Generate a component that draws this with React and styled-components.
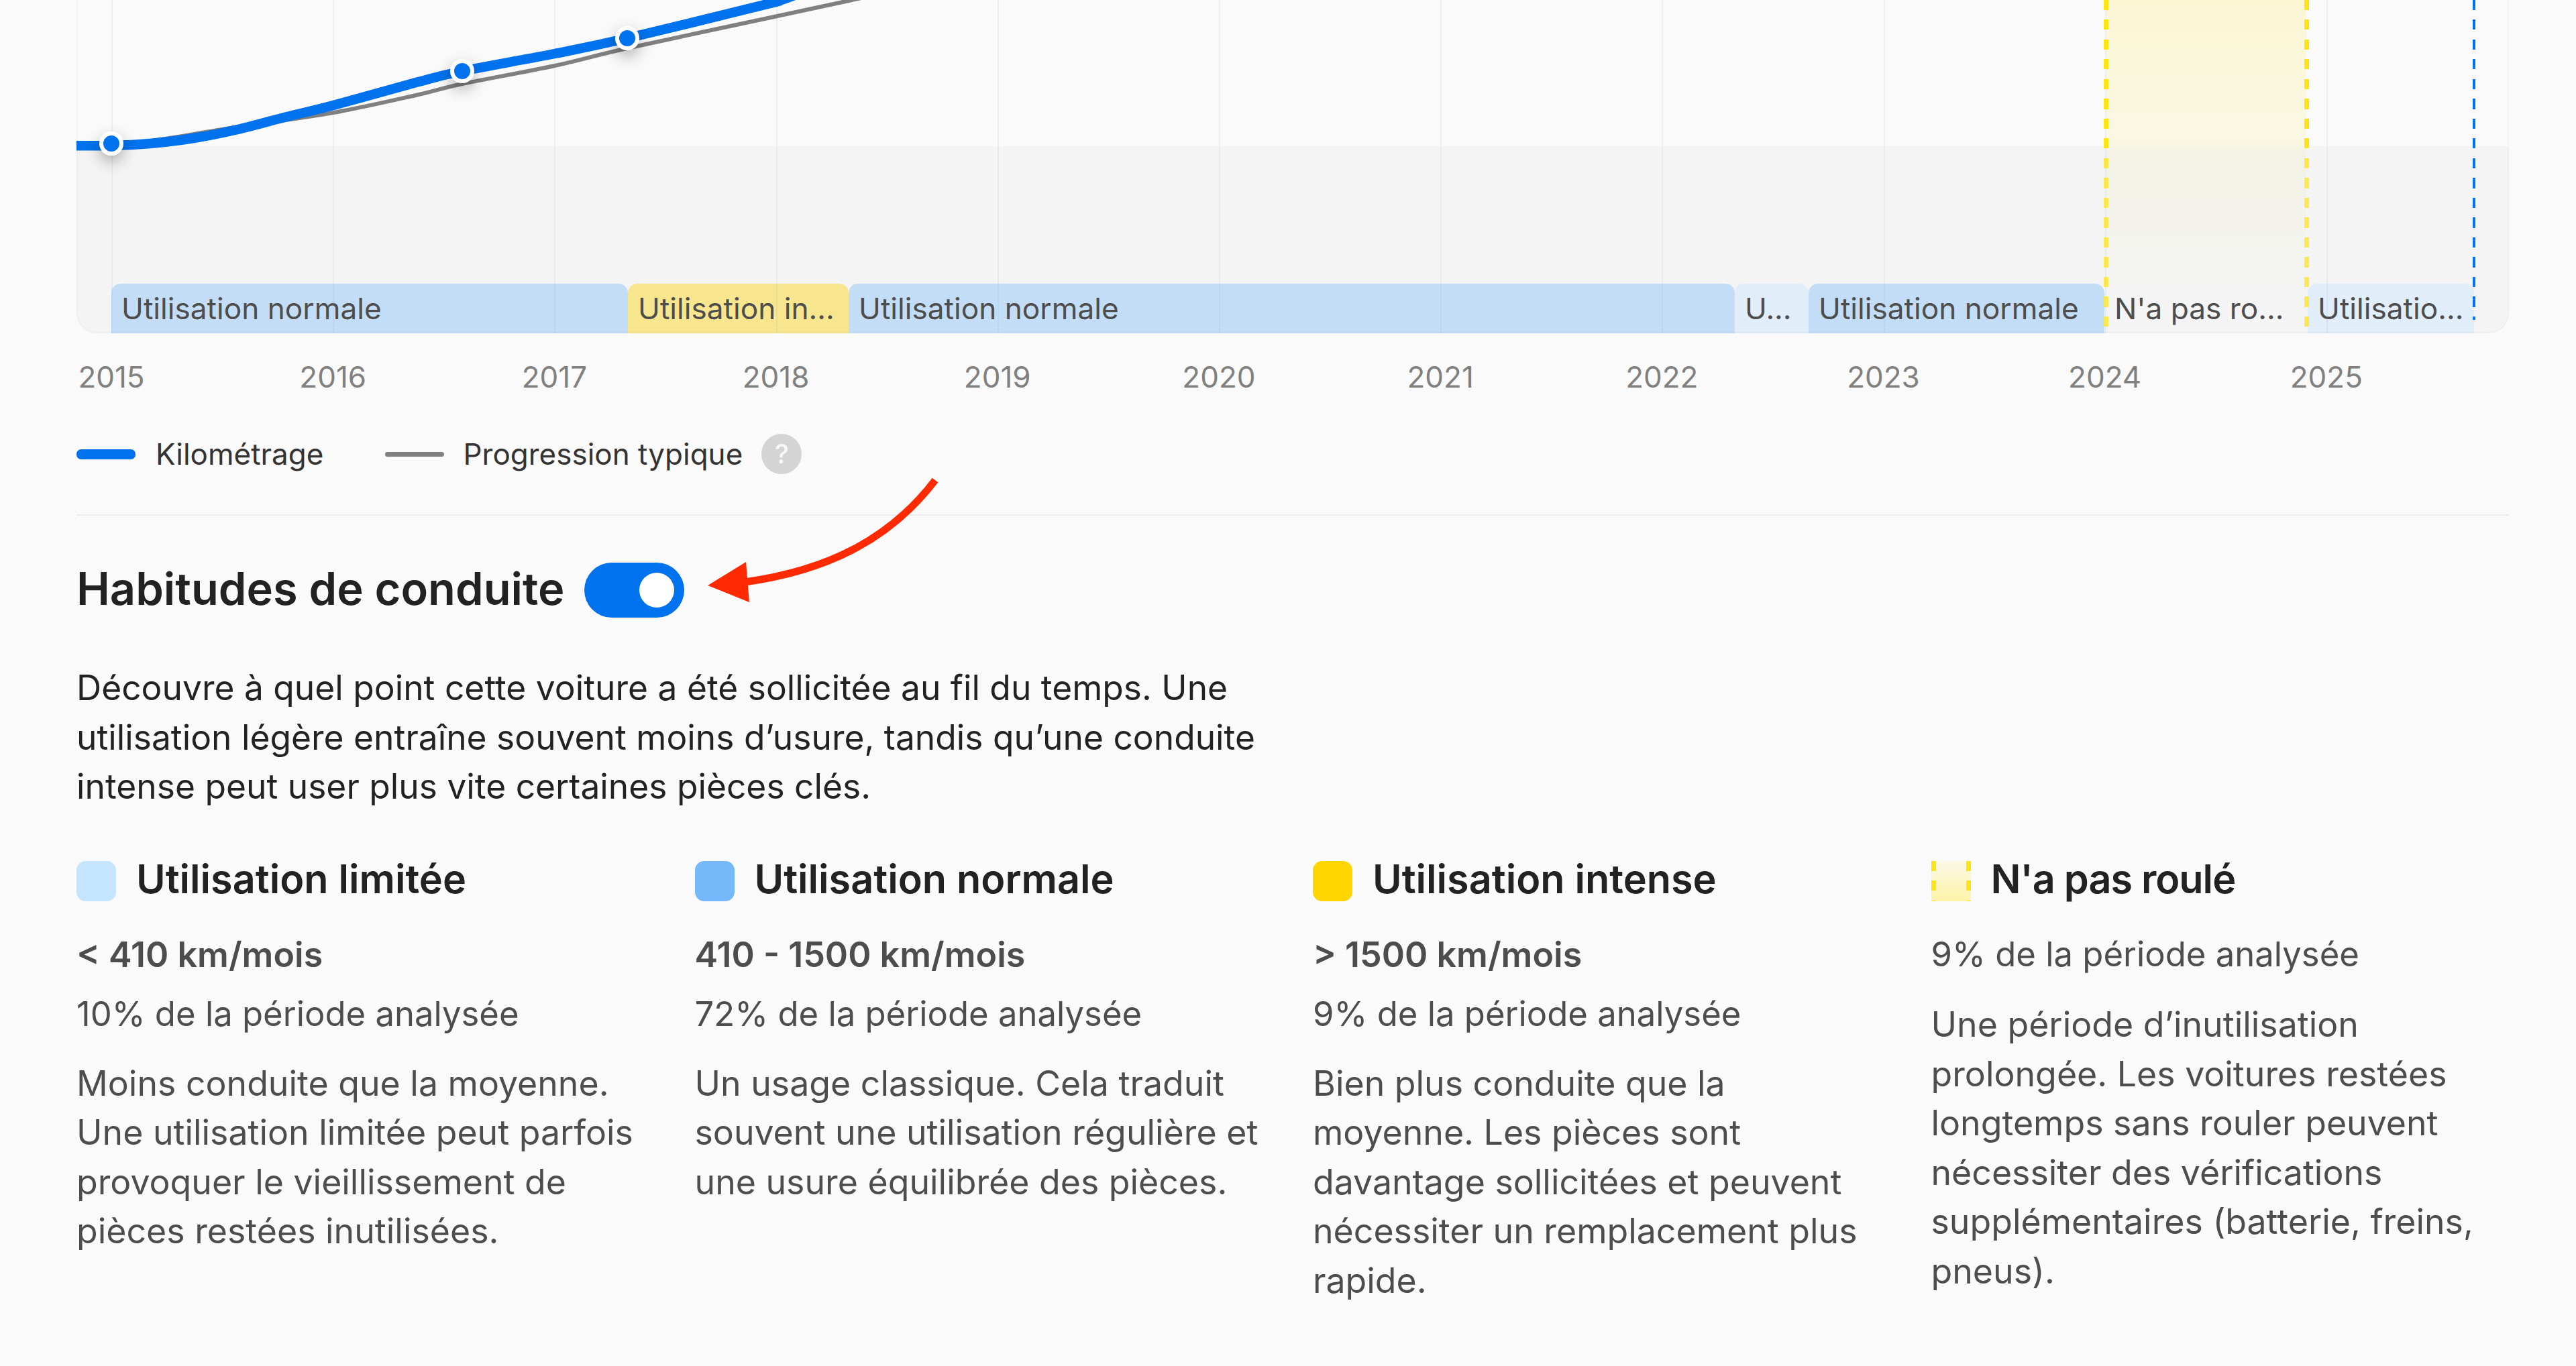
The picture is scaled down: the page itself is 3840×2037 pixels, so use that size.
import React from 'react'
import styled, { createGlobalStyle } from 'styled-components'

const YEARS = [2015, 2016, 2017, 2018, 2019, 2020, 2021, 2022, 2023, 2024, 2025]
const STEP = 330.2

const SEGMENTS = [
    { kind: 'normal', width: 770, label: 'Utilisation normale' },
    { kind: 'intense', width: 329, label: 'Utilisation in...' },
    { kind: 'normal', width: 1321, label: 'Utilisation normale' },
    { kind: 'light', width: 110, label: 'U...' },
    { kind: 'normal', width: 441, label: 'Utilisation normale' },
    { kind: 'none', width: 303, label: "N'a pas ro..." },
    { kind: 'light', width: 248, label: 'Utilisatio...' },
]

const USAGES = [
    {
        kind: 'limited',
        title: 'Utilisation limitée',
        range: '< 410 km/mois',
        share: '10% de la période analysée',
        text: 'Moins conduite que la moyenne. Une utilisation limitée peut parfois provoquer le vieillissement de pièces restées inutilisées.',
    },
    {
        kind: 'normal',
        title: 'Utilisation normale',
        range: '410 - 1500 km/mois',
        share: '72% de la période analysée',
        text: 'Un usage classique. Cela traduit souvent une utilisation régulière et une usure équilibrée des pièces.',
    },
    {
        kind: 'intense',
        title: 'Utilisation intense',
        range: '> 1500 km/mois',
        share: '9% de la période analysée',
        text: 'Bien plus conduite que la moyenne. Les pièces sont davantage sollicitées et peuvent nécessiter un remplacement plus rapide.',
    },
    {
        kind: 'idle',
        title: "N'a pas roulé",
        share: '9% de la période analysée',
        text: 'Une période d’inutilisation prolongée. Les voitures restées longtemps sans rouler peuvent nécessiter des vérifications supplémentaires (batterie, freins, pneus).',
    },
]

const KM_POINTS = [[-40, 217], [52, 217], [110, 214], [175, 206], [236, 194], [310, 175], [383, 157], [506, 123], [575, 106], [713, 80], [821, 57], [1026, 7], [1051, 0], [1100, -18]]
const TYPICAL_POINTS = [[52, 217], [119, 209], [236, 190], [383, 168], [506, 142], [575, 125], [713, 98], [821, 72], [1026, 28], [1170, -3], [1230, -15]]

// catmull-rom through the measured points
const smoothPath = (pts) => {
    let d = `M${pts[0][0]} ${pts[0][1]}`
    for (let i = 0; i < pts.length - 1; i++) {
        const p0 = pts[i - 1] || pts[i]
        const p1 = pts[i]
        const p2 = pts[i + 1]
        const p3 = pts[i + 2] || p2
        const c1 = [p1[0] + (p2[0] - p0[0]) / 6, p1[1] + (p2[1] - p0[1]) / 6]
        const c2 = [p2[0] - (p3[0] - p1[0]) / 6, p2[1] - (p3[1] - p1[1]) / 6]
        d += ` C${c1[0]} ${c1[1]} ${c2[0]} ${c2[1]} ${p2[0]} ${p2[1]}`
    }
    return d
}

const segmentColors = {
    normal: '#c4ddf7',
    intense: '#f8e68f',
    light: '#e1edf9',
    none: 'transparent',
}

const swatchColors = {
    limited: '#c5e5ff',
    normal: '#75b9fb',
    intense: '#ffd600',
}

const App = () => {
    return (
        <Page>
            <GlobalStyle />
            <Chart>
                <Sky />
                <Band>
                    <Bars>
                        {SEGMENTS.map((s, i) => (
                            <Segment key={i} $kind={s.kind} $width={s.width}>{s.label}</Segment>
                        ))}
                    </Bars>
                </Band>
                {YEARS.map((y, i) => (
                    <GridLine key={y} style={{ left: 52 + i * STEP }} />
                ))}
                <IdleZone />
                <TodayLine />
                <Curve viewBox="0 0 3626 497" width="3626" height="497">
                    <defs>
                        <filter id="dotShadow" x="-150%" y="-150%" width="400%" height="400%">
                            <feDropShadow dx="0" dy="9" stdDeviation="11" floodColor="#000" floodOpacity="0.3" />
                        </filter>
                    </defs>
                    <path d={smoothPath(TYPICAL_POINTS)} fill="none" stroke="#808080" strokeWidth="6" />
                    <path d={smoothPath(KM_POINTS)} fill="none" stroke="#0072ee" strokeWidth="14.5" />
                    <Dot cx="52" cy="214" />
                    <Dot cx="575" cy="106" />
                    <Dot cx="821" cy="57" />
                </Curve>
            </Chart>

            <YearRow>
                {YEARS.map((y) => (
                    <Year key={y}><span>{y}</span></Year>
                ))}
            </YearRow>

            <Legend>
                <LegendLine $thick />
                <LegendText>Kilométrage</LegendText>
                <LegendLine />
                <LegendText>Progression typique</LegendText>
                <Help>?</Help>
            </Legend>

            <Divider />

            <HeadingRow>
                <Heading>Habitudes de conduite</Heading>
                <Toggle><Knob /></Toggle>
            </HeadingRow>

            <Intro>
                Découvre à quel point cette voiture a été sollicitée au fil du temps. Une utilisation légère entraîne souvent moins d’usure, tandis qu’une conduite intense peut user plus vite certaines pièces clés.
            </Intro>

            <Columns>
                {USAGES.map((u) => (
                    <Column key={u.kind}>
                        <TitleRow>
                            <Swatch $kind={u.kind} />
                            <Title $narrow={u.kind === 'idle'}>{u.title}</Title>
                        </TitleRow>
                        {u.range && <Range>{u.range}</Range>}
                        <Share $first={!u.range}>{u.share}</Share>
                        <Description $tight={!u.range}>{u.text}</Description>
                    </Column>
                ))}
            </Columns>

            <Arrow viewBox="0 0 380 240" width="380" height="240">
                <path d="M354 36 C290 120 200 170 70 188" fill="none" stroke="#ff2a00" strokeWidth="11" />
                <path d="M15 193 L72 158 L77 218 Z" fill="#ff2a00" />
            </Arrow>
        </Page>
    )
}

export default App

const GlobalStyle = createGlobalStyle`
    html, body {
        margin: 0;
        background: #fafafa;
        overflow: hidden;
    }
`
const Page = styled.div`
    position: relative;
    box-sizing: border-box;
    height: 2037px;
    padding: 0 100px 0 114px;
    font-family: Inter, 'Liberation Sans', sans-serif;
    color: #222;
    background: #fafafa;
`
const Chart = styled.div`
    position: relative;
    display: flex;
    flex-direction: column;
    height: 497px;
    overflow: hidden;
    border-radius: 0 0 30px 30px;

    &::after {
        content: '';
        position: absolute;
        inset: 0;
        border: 2px solid rgba(0, 0, 0, 0.02);
        border-top: 0;
        border-radius: 0 0 30px 30px;
        pointer-events: none;
    }
`
const Sky = styled.div`
    height: 218px;
    background: #fafafa;
`
const Band = styled.div`
    flex: 1;
    display: flex;
    align-items: flex-end;
    background: #f4f4f4;
`
const Bars = styled.div`
    display: flex;
    height: 74px;
    padding-left: 52px;
`
const Segment = styled.div`
    box-sizing: border-box;
    flex: 0 0 ${(p) => p.$width}px;
    padding-left: 15px;
    overflow: hidden;
    white-space: nowrap;
    font-size: 44.2px;
    line-height: 74px;
    color: #4d4d4d;
    background: ${(p) => segmentColors[p.$kind]};
    border-radius: 14px 14px 0 0;
`
const GridLine = styled.div`
    position: absolute;
    top: 0;
    bottom: 0;
    width: 2px;
    background: rgba(120, 160, 210, 0.12);
`
const IdleZone = styled.div`
    position: absolute;
    top: 0;
    bottom: 0;
    left: 3022px;
    width: 306px;
    background: linear-gradient(to bottom, #fbf6d4 0%, #faf8e3 43%, #f3f2e5 46%, rgba(244, 244, 244, 0) 88%) center / calc(100% - 8px) 100% no-repeat;

    &::before {
        content: '';
        position: absolute;
        inset: 0;
        background:
            repeating-linear-gradient(to bottom, #ffe414 0 15px, transparent 15px 29.5px) left top / 7px 100% no-repeat,
            repeating-linear-gradient(to bottom, #ffe414 0 15px, transparent 15px 29.5px) right top / 7px 100% no-repeat;
        mask-image: linear-gradient(to bottom, #000 44%, rgba(0, 0, 0, 0.72) 50%, rgba(0, 0, 0, 0.72) 100%);
    }
`
const TodayLine = styled.div`
    position: absolute;
    top: 0;
    bottom: 20px;
    left: 3572px;
    width: 4px;
    background: repeating-linear-gradient(to bottom, #0072ee 0 15px, transparent 15px 29.5px);
`
const Curve = styled.svg`
    position: absolute;
    top: 0;
    left: 0;
    overflow: hidden;
`
const Dot = styled.circle`
    r: 15px;
    fill: #0072ee;
    stroke: #fff;
    stroke-width: 6px;
    filter: url(#dotShadow);
`
const YearRow = styled.div`
    display: flex;
    height: 60px;
    margin-top: 35px;
    padding-left: 52px;
`
const Year = styled.div`
    flex: 0 0 ${STEP}px;
    font-size: 44px;
    line-height: 60px;
    color: #808080;

    span {
        display: inline-block;
        transform: translateX(-50%);
    }
`
const Legend = styled.div`
    display: flex;
    align-items: center;
    height: 60px;
    margin-top: 55px;
`
const LegendLine = styled.div`
    width: 88px;
    height: ${(p) => (p.$thick ? 15 : 7)}px;
    margin-right: ${(p) => (p.$thick ? 30 : 28)}px;
    background: ${(p) => (p.$thick ? '#0072ee' : '#808080')};
    border-radius: 7px;
`
const LegendText = styled.div`
    margin-right: 92px;
    font-size: 44px;
    color: #333;

    & + div + & {
        margin-right: 28px;
    }
`
const Help = styled.div`
    width: 60px;
    height: 60px;
    border-radius: 50%;
    background: #d4d4d4;
    color: rgba(255, 255, 255, 0.85);
    font-size: 40px;
    font-weight: 500;
    line-height: 60px;
    text-align: center;
`
const Divider = styled.div`
    height: 2px;
    margin-top: 60px;
    background: #ececec;
`
const HeadingRow = styled.div`
    display: flex;
    align-items: center;
    gap: 30px;
    margin-top: 70px;
`
const Heading = styled.h2`
    margin: 0;
    padding-bottom: 4px;
    font-size: 66.8px;
    font-weight: 600;
    line-height: 76px;
    color: #222;
`
const Toggle = styled.div`
    display: flex;
    align-items: center;
    justify-content: flex-end;
    box-sizing: border-box;
    width: 149px;
    height: 82px;
    padding-right: 15px;
    background: #0072ee;
    border-radius: 41px;
`
const Knob = styled.div`
    width: 52px;
    height: 52px;
    background: #fff;
    border-radius: 50%;
`
const Intro = styled.p`
    width: 1900px;
    margin: 68px 0 0;
    font-size: 51.5px;
    line-height: 73.5px;
    color: #222;
`
const Columns = styled.div`
    display: grid;
    grid-template-columns: repeat(4, 1fr);
    column-gap: 60px;
    margin-top: 74px;
`
const Column = styled.div`
    display: flex;
    flex-direction: column;
`
const TitleRow = styled.div`
    display: flex;
    align-items: center;
    gap: 30px;
    height: 60px;
`
const Swatch = styled.div`
    flex: 0 0 59px;
    height: 60px;
    border-radius: ${(p) => (p.$kind === 'idle' ? 0 : 14)}px;
    background: ${(p) => swatchColors[p.$kind]};
    ${(p) =>
        p.$kind === 'idle' &&
        `background:
            repeating-linear-gradient(to bottom, #ffe414 0 15px, transparent 15px 29.5px) left top / 7px 100% no-repeat,
            repeating-linear-gradient(to bottom, #ffe414 0 15px, transparent 15px 29.5px) right top / 7px 100% no-repeat,
            linear-gradient(to bottom, #fbf8e6, #fdf3a8);`}
`
const Title = styled.div`
    padding-bottom: 5px;
    font-size: 59.3px;
    font-weight: 600;
    line-height: 60px;
    letter-spacing: ${(p) => (p.$narrow ? -1 : 0)}px;
    color: #222;
`
const Range = styled.div`
    margin-top: 43px;
    font-size: 52px;
    font-weight: 600;
    line-height: 73.5px;
    color: #4d4d4d;
`
const Share = styled.div`
    margin-top: ${(p) => (p.$first ? 42 : 15)}px;
    font-size: 50.8px;
    line-height: 73.5px;
    color: #4d4d4d;
`
const Description = styled.p`
    margin: ${(p) => (p.$tight ? 32 : 30)}px 0 0;
    font-size: 51.8px;
    line-height: 73.5px;
    color: #4d4d4d;
`
const Arrow = styled.svg`
    position: absolute;
    top: 680px;
    left: 1040px;
`
